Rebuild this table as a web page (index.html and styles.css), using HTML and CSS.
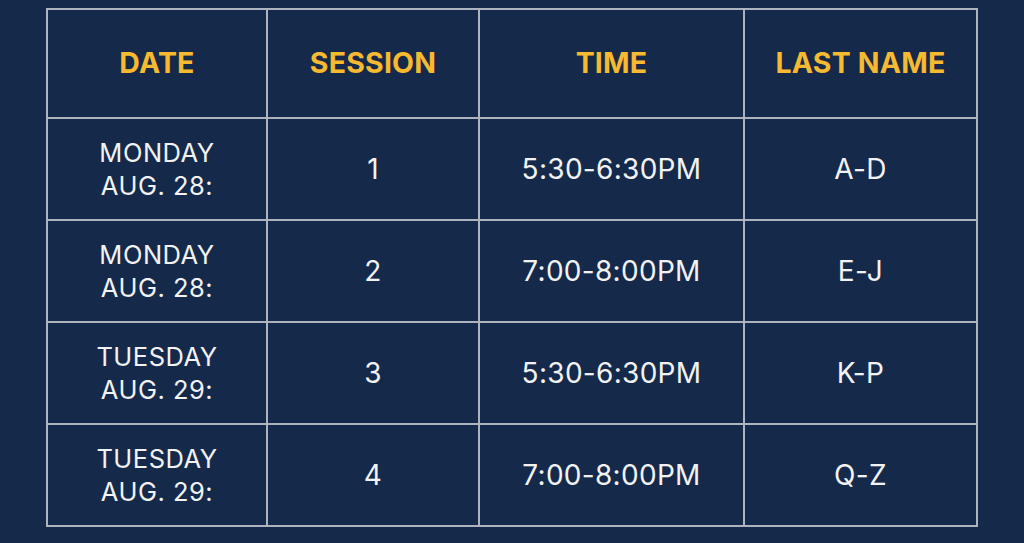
FILE: index.html
```html
<!DOCTYPE html>
<html lang="en">
<head>
<meta charset="utf-8">
<title>Sessions</title>
<link rel="stylesheet" href="styles.css">
</head>
<body>
<main class="page">
  <table class="schedule">
    <colgroup>
      <col class="c-date">
      <col class="c-session">
      <col class="c-time">
      <col class="c-name">
    </colgroup>
    <thead>
      <tr class="head-row">
        <th>DATE</th>
        <th>SESSION</th>
        <th>TIME</th>
        <th>LAST NAME</th>
      </tr>
    </thead>
    <tbody>
      <tr>
        <td class="date">MONDAY<br>AUG. 28:</td>
        <td>1</td>
        <td>5:30-6:30PM</td>
        <td>A-D</td>
      </tr>
      <tr>
        <td class="date">MONDAY<br>AUG. 28:</td>
        <td>2</td>
        <td>7:00-8:00PM</td>
        <td>E-J</td>
      </tr>
      <tr>
        <td class="date">TUESDAY<br>AUG. 29:</td>
        <td>3</td>
        <td>5:30-6:30PM</td>
        <td>K-P</td>
      </tr>
      <tr>
        <td class="date">TUESDAY<br>AUG. 29:</td>
        <td>4</td>
        <td>7:00-8:00PM</td>
        <td>Q-Z</td>
      </tr>
    </tbody>
  </table>
</main>
</body>
</html>
```
FILE: styles.css
```css
html, body {
  margin: 0;
  padding: 0;
  background: #152a4a;
}
.page {
  width: 1024px;
  height: 543px;
  padding: 8px 0 0 46px;
  box-sizing: border-box;
}
.schedule {
  border-collapse: collapse;
  table-layout: fixed;
  width: 930px;
  font-family: "Inter", "Liberation Sans", sans-serif;
  color: #f2f2f2;
}
.c-date { width: 220px; }
.c-session { width: 212px; }
.c-time { width: 265px; }
.c-name { width: 233px; }
.schedule th,
.schedule td {
  border: 2px solid #aeb4be;
  text-align: center;
  vertical-align: middle;
  padding: 0;
}
.schedule th {
  height: 105px;
  padding-bottom: 2px;
  color: #f6b92f;
  font-weight: 700;
  font-size: 28.5px;
  letter-spacing: 0.2px;
}
.schedule td {
  height: 100px;
  font-size: 28px;
  font-weight: 400;
  line-height: 33px;
  letter-spacing: 0.3px;
}
.schedule td.date {
  font-size: 25.5px;
  line-height: 33px;
  letter-spacing: 0.5px;
}
```
